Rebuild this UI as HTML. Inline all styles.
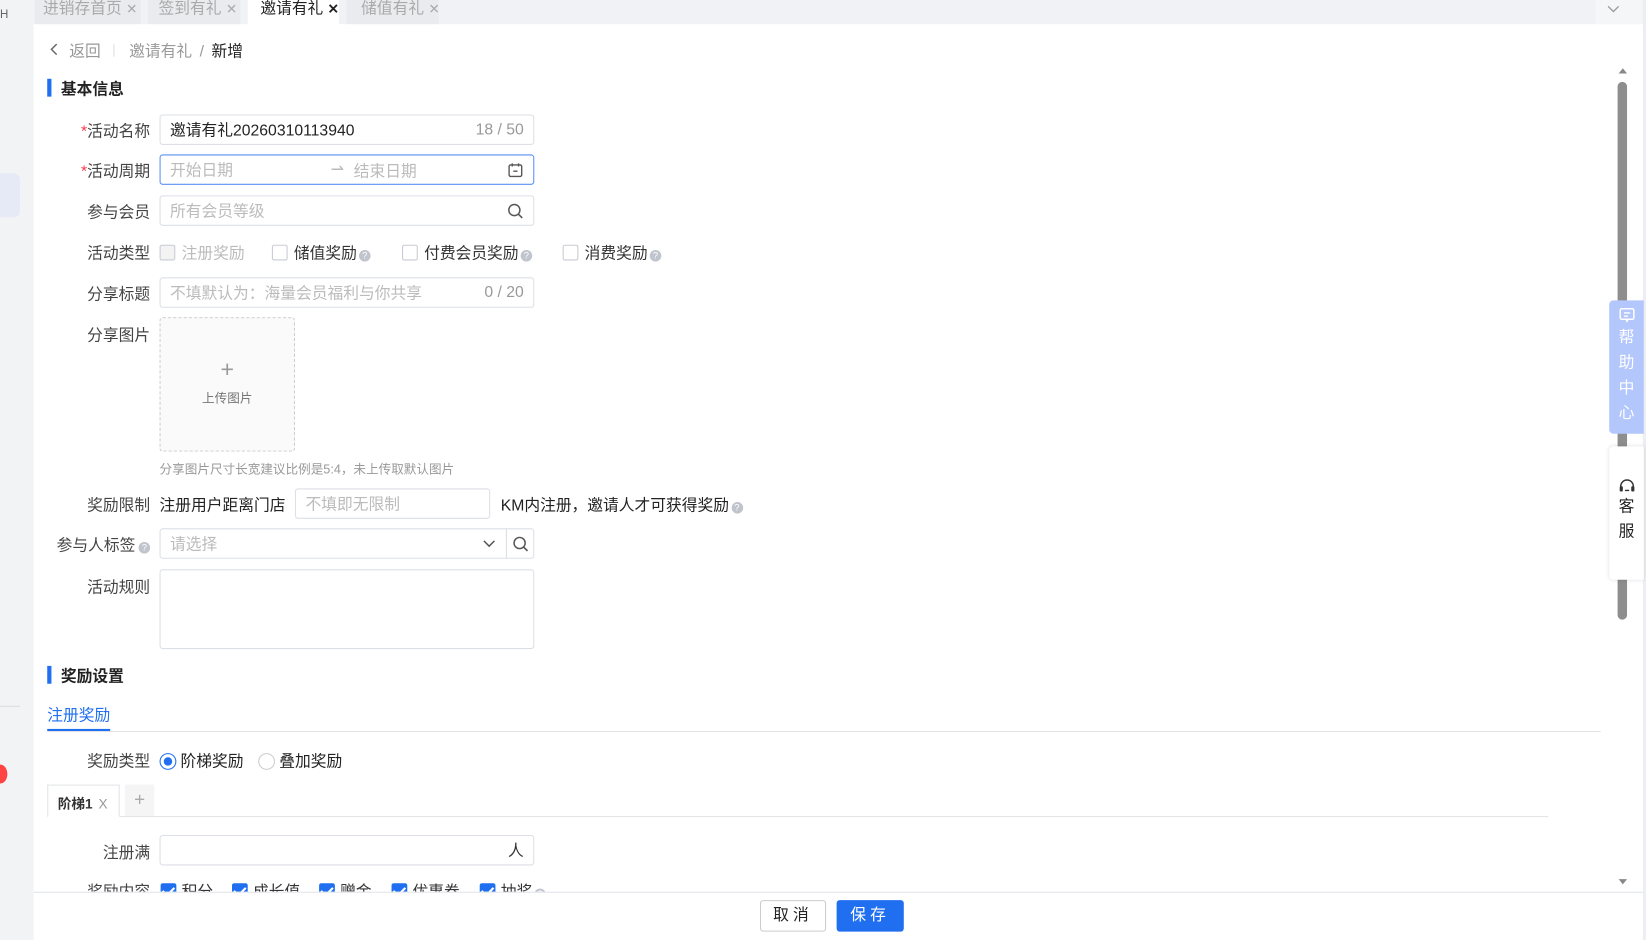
<!DOCTYPE html>
<html><head><meta charset="utf-8"><style>
*{box-sizing:border-box;margin:0;padding:0}
html,body{width:1646px;height:940px;overflow:hidden;background:#fff}
#r{position:absolute;left:0;top:0;width:1568px;height:895px;transform:scale(1.0497,1.0503);transform-origin:0 0;font-family:"Liberation Sans","Noto Sans CJK SC",sans-serif;font-size:15px;color:#333}
.a{position:absolute}
.lbl{position:absolute;right:1425px;text-align:right;white-space:nowrap;color:#444}
.inp{position:absolute;border:1px solid #dcdfe6;border-radius:3px;background:#fff;height:29px;display:flex;align-items:center;padding:0 9px;color:#bbb;white-space:nowrap}
.star{color:#f34;}
.cb{display:inline-block;width:15px;height:15px;border:1px solid #c8cbd2;border-radius:2px;vertical-align:-2px;margin-right:6px;background:#fff}
.q{display:inline-block;width:11px;height:11px;border-radius:50%;background:#c0c4cc;color:#fff;font-size:9px;line-height:11px;text-align:center;vertical-align:0;margin-left:2px}
.cbb{display:inline-block;width:15px;height:15px;border-radius:2px;background:#1f6ff0;vertical-align:-2px;margin-right:5px;position:relative}
.cbb:after{content:"";position:absolute;left:4px;top:1px;width:5px;height:9px;border:solid #fff;border-width:0 2px 2px 0;transform:rotate(45deg)}
.tab{position:absolute;top:0;height:23px;background:#e9ebef;color:#aaa;line-height:18px;white-space:nowrap}
</style></head><body><div id="r">
<!-- sidebar -->
<div class="a" style="left:0;top:0;width:32px;height:895px;background:#f2f3f5"></div>
<div class="a" style="left:0;top:165px;width:19px;height:42px;background:#e6eaf6;border-radius:0 6px 6px 0"></div>
<div class="a" style="left:0;top:8px;font-size:11px;color:#666">H</div>
<div class="a" style="left:0;top:672px;width:19px;height:1px;background:#ddd"></div>
<div class="a" style="left:-6px;top:728px;width:13px;height:18px;border-radius:50%;background:#f44"></div>
<!-- tab bar -->
<div class="a" style="left:32px;top:0;width:1533px;height:23px;background:#f0f2f5"></div>
<div class="tab" style="left:33px;width:101px;padding-left:8px">进销存首页 <span style="font-size:13px">✕</span></div>
<div class="tab" style="left:141px;width:88px;padding-left:10px">签到有礼 <span style="font-size:13px">✕</span></div>
<div class="tab" style="left:236px;width:87px;height:24px;background:#fff;color:#222;padding-left:12px">邀请有礼 <span style="font-size:13px;font-weight:bold">✕</span></div>
<div class="tab" style="left:330px;width:88px;padding-left:14px">储值有礼 <span style="font-size:13px">✕</span></div>
<div class="a" style="left:1520px;top:0;width:45px;height:23px;background:#f5f6f8"></div>
<svg class="a" style="left:1530px;top:3px" width="14" height="10"><path d="M2 3l5 5 5-5" stroke="#999" fill="none" stroke-width="1.3"/></svg>
<div class="a" style="left:1565px;top:0;width:3px;height:895px;background:#eceef1"></div>
<!-- scrollbar -->
<svg class="a" style="left:1540px;top:63px" width="12" height="8"><path d="M2 7l4-5 4 5z" fill="#888"/></svg>
<div class="a" style="left:1541px;top:78px;width:9px;height:512px;border-radius:5px;background:#8e8e8e"></div>
<svg class="a" style="left:1540px;top:836px" width="12" height="8"><path d="M2 1l4 5 4-5z" fill="#888"/></svg>
<!-- help -->
<div class="a" style="left:1533px;top:286px;width:33px;height:127px;background:#b3c7fd;border-radius:4px 0 0 4px;color:#fff;text-align:center;font-size:15px;line-height:24px;padding-top:6px">
<svg width="16" height="16" style="display:block;margin:0 auto 2px"><rect x="1.5" y="2" width="13" height="10" rx="1.5" stroke="#fff" fill="none" stroke-width="1.4"/><path d="M5 6h6M5 9h4M7 12l1 2 1-2" stroke="#fff" stroke-width="1.3" fill="none"/></svg>帮<br>助<br>中<br>心</div>
<div class="a" style="left:1533px;top:425px;width:33px;height:127px;background:#fff;border-radius:4px 0 0 4px;box-shadow:0 0 4px rgba(0,0,0,.12);text-align:center;line-height:24px;color:#222;padding-top:30px">
<svg width="18" height="16" style="display:block;margin:0 auto"><path d="M3 10V8a6 6 0 0 1 12 0v2" stroke="#333" fill="none" stroke-width="1.4"/><rect x="2" y="8" width="3" height="5" rx="1" fill="#333"/><rect x="13" y="8" width="3" height="5" rx="1" fill="#333"/><path d="M7 12h4" stroke="#333" stroke-width="1.3"/></svg>客<br>服</div>
<!-- breadcrumb -->
<svg class="a" style="left:47px;top:41px" width="10" height="12"><path d="M7 1L2 6l5 5" stroke="#666" fill="none" stroke-width="1.4"/></svg>
<div class="a" style="left:66px;top:38px;color:#999">返回</div>
<div class="a" style="left:108px;top:42px;width:1px;height:12px;background:#ddd"></div>
<div class="a" style="left:123px;top:38px;color:#999">邀请有礼 <span style="margin:0 3px">/</span> <span style="color:#222">新增</span></div>
<!-- section 1 -->
<div class="a" style="left:45px;top:75px;width:4px;height:17px;background:#1f6ff0"></div>
<div class="a" style="left:58px;top:74px;font-weight:bold;color:#222">基本信息</div>
<div class="lbl" style="top:114px"><span class="star">*</span>活动名称</div>
<div class="inp" style="left:152px;top:109px;width:357px;color:#222">邀请有礼20260310113940<span style="margin-left:auto;color:#999">18 / 50</span></div>
<div class="lbl" style="top:152px"><span class="star">*</span>活动周期</div>
<div class="inp" style="left:152px;top:147px;width:357px;border-color:#5b8ff3"><span>开始日期</span>
<span class="a" style="left:162px;top:4px;color:#bbb">⇀</span><span class="a" style="left:184px;top:4px">结束日期</span>
<svg style="margin-left:auto" width="16" height="16"><rect x="2" y="3" width="12" height="11" rx="1.5" stroke="#555" fill="none" stroke-width="1.3"/><path d="M5 1.5v3M11 1.5v3M6 9h4" stroke="#555" stroke-width="1.3"/></svg></div>
<div class="lbl" style="top:191px">参与会员</div>
<div class="inp" style="left:152px;top:186px;width:357px">所有会员等级<svg style="margin-left:auto" width="16" height="16"><circle cx="7" cy="7" r="5.3" stroke="#555" fill="none" stroke-width="1.4"/><path d="M11 11l3.5 3.5" stroke="#555" stroke-width="1.5"/></svg></div>
<div class="lbl" style="top:230px">活动类型</div>
<div class="a" style="left:152px;top:230px;white-space:nowrap;color:#bbb"><span class="cb" style="background:#f3f3f3"></span>注册奖励</div>
<div class="a" style="left:259px;top:230px;white-space:nowrap"><span class="cb"></span>储值奖励<span class="q">?</span></div>
<div class="a" style="left:383px;top:230px;white-space:nowrap"><span class="cb"></span>付费会员奖励<span class="q">?</span></div>
<div class="a" style="left:536px;top:230px;white-space:nowrap"><span class="cb"></span>消费奖励<span class="q">?</span></div>
<div class="lbl" style="top:269px">分享标题</div>
<div class="inp" style="left:152px;top:264px;width:357px">不填默认为：海量会员福利与你共享<span style="margin-left:auto;color:#999">0 / 20</span></div>
<div class="lbl" style="top:308px">分享图片</div>
<div class="a" style="left:152px;top:302px;width:129px;height:128px;border:1px dashed #ccc;border-radius:3px;background:#fafafa;text-align:center;color:#777;font-size:12px"><div style="font-size:22px;color:#999;margin-top:38px;line-height:22px">+</div><div style="margin-top:7px">上传图片</div></div>
<div class="a" style="left:152px;top:438px;font-size:12px;color:#999">分享图片尺寸长宽建议比例是5:4，未上传取默认图片</div>
<div class="lbl" style="top:470px">奖励限制</div>
<div class="a" style="left:152px;top:470px;color:#222">注册用户距离门店</div>
<div class="inp" style="left:281px;top:465px;width:186px">不填即无限制</div>
<div class="a" style="left:477px;top:470px;color:#222">KM内注册，邀请人才可获得奖励<span class="q">?</span></div>
<div class="lbl" style="top:508px">参与人标签<span class="q" style="margin-left:3px">?</span></div>
<div class="inp" style="left:152px;top:503px;width:331px;border-radius:3px 0 0 3px">请选择<svg style="margin-left:auto" width="14" height="10"><path d="M2 2l5 5 5-5" stroke="#555" fill="none" stroke-width="1.4"/></svg></div>
<div class="inp" style="left:482px;top:503px;width:27px;padding:0 5px;border-radius:0 3px 3px 0"><svg width="16" height="16"><circle cx="7" cy="7" r="5.3" stroke="#555" fill="none" stroke-width="1.4"/><path d="M11 11l3.5 3.5" stroke="#555" stroke-width="1.5"/></svg></div>
<div class="lbl" style="top:548px">活动规则</div>
<div class="a" style="left:152px;top:542px;width:357px;height:76px;border:1px solid #dcdfe6;border-radius:3px"></div>
<!-- section 2 -->
<div class="a" style="left:45px;top:634px;width:4px;height:17px;background:#1f6ff0"></div>
<div class="a" style="left:58px;top:633px;font-weight:bold;color:#222">奖励设置</div>
<div class="a" style="left:45px;top:670px;color:#1f6ff0">注册奖励</div>
<div class="a" style="left:45px;top:696px;width:1480px;height:1px;background:#e2e4e8"></div>
<div class="a" style="left:45px;top:694px;width:60px;height:2px;background:#1f6ff0"></div>
<div class="lbl" style="top:714px">奖励类型</div>
<div class="a" style="left:152px;top:714px;color:#222;white-space:nowrap"><span style="display:inline-block;width:16px;height:16px;border:1px solid #1f6ff0;border-radius:50%;vertical-align:-3px;position:relative;margin-right:4px"><span style="position:absolute;left:3px;top:3px;width:8px;height:8px;border-radius:50%;background:#1f6ff0"></span></span>阶梯奖励<span style="display:inline-block;width:16px;height:16px;border:1px solid #ccc;border-radius:50%;vertical-align:-3px;margin:0 4px 0 14px"></span>叠加奖励</div>
<div class="a" style="left:45px;top:747px;width:69px;height:31px;border:1px solid #e2e4e8;border-bottom:1px solid #fff;background:#fff;font-size:13px;font-weight:bold;color:#333;padding:7px 0 0 9px;z-index:2">阶梯1 <span style="font-weight:normal;color:#999;margin-left:2px">X</span></div>
<div class="a" style="left:119px;top:747px;width:28px;height:30px;background:#f5f5f5;color:#aaa;text-align:center;font-size:18px;line-height:28px">+</div>
<div class="a" style="left:45px;top:777px;width:1430px;height:1px;background:#e2e4e8"></div>
<div class="lbl" style="top:801px">注册满</div>
<div class="inp" style="left:152px;top:795px;width:357px;color:#333"><span style="margin-left:auto">人</span></div>
<div class="lbl" style="top:838px">奖励内容</div>
<div class="a" style="left:153px;top:838px;white-space:nowrap;color:#333"><span class="cbb"></span>积分</div>
<div class="a" style="left:221px;top:838px;white-space:nowrap;color:#333"><span class="cbb"></span>成长值</div>
<div class="a" style="left:304px;top:838px;white-space:nowrap;color:#333"><span class="cbb"></span>赠金</div>
<div class="a" style="left:373px;top:838px;white-space:nowrap;color:#333"><span class="cbb"></span>优惠券</div>
<div class="a" style="left:457px;top:838px;white-space:nowrap;color:#333"><span class="cbb"></span>抽奖<span class="q">?</span></div>
<!-- footer -->
<div class="a" style="left:32px;top:849px;width:1533px;height:46px;background:#fff;border-top:1px solid #e2e4e8"></div>
<div class="a" style="left:724px;top:857px;width:63px;height:30px;border:1px solid #ccc;border-radius:3px;text-align:center;line-height:28px;color:#222;letter-spacing:4px">取消</div>
<div class="a" style="left:797px;top:857px;width:64px;height:30px;background:#1f6ff0;border-radius:3px;text-align:center;line-height:30px;color:#fff;letter-spacing:4px">保存</div>
</div></body></html>
